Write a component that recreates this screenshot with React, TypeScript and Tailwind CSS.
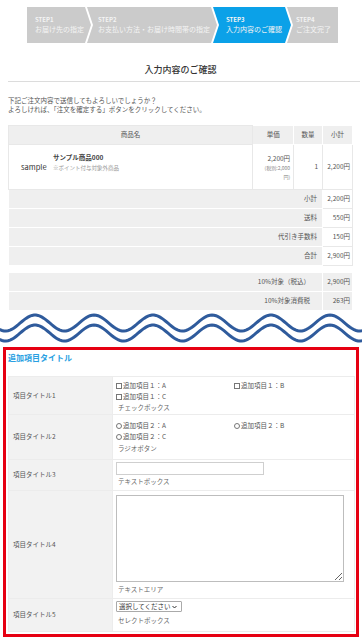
import React from "react"

const steps = [
  { label: "STEP1", text: "お届け先の指定", w: "w-[64px]", shape: "first" },
  { label: "STEP2", text: "お支払い方法・お届け時間帯の指定", w: "w-[130px]", shape: "mid" },
  { label: "STEP3", text: "入力内容のご確認", w: "w-[78px]", shape: "active" },
  { label: "STEP4", text: "ご注文完了", w: "w-[51px]", shape: "last" },
]

const summary = [
  { label: "小計", value: "2,200円" },
  { label: "送料", value: "550円" },
  { label: "代引き手数料", value: "150円" },
  { label: "合計", value: "2,900円" },
]

function wavePath(center: number) {
  const pts: string[] = []
  for (let x = -4; x <= 366; x += 2) {
    const y = center - 8 * Math.cos((2 * Math.PI * (x - 35)) / 59)
    pts.push(`${x},${y.toFixed(2)}`)
  }
  return "M" + pts.join(" L")
}

function StepBar() {
  return (
    <div className="flex h-[36px] pl-[27px]">
      {steps.map((s) => (
        <div
          key={s.label}
          className={
            s.w +
            " h-full flex flex-col justify-center text-[#f4f4f4] " +
            (s.shape === "first"
              ? "pl-[8px] bg-[#cbcbcb] [clip-path:polygon(0_0,calc(100%_-_6px)_0,100%_50%,calc(100%_-_6px)_100%,0_100%)]"
              : s.shape === "mid"
              ? "-ml-[4px] pl-[11px] bg-[#cbcbcb] [clip-path:polygon(0_0,calc(100%_-_6px)_0,100%_50%,calc(100%_-_6px)_100%,0_100%,6px_50%)]"
              : s.shape === "active"
              ? "-ml-[4px] pl-[13px] bg-[#0ba1e8] [clip-path:polygon(0_0,calc(100%_-_6px)_0,100%_50%,calc(100%_-_6px)_100%,0_100%,6px_50%)]"
              : "-ml-[4px] pl-[9px] bg-[#cbcbcb] [clip-path:polygon(0_0,100%_0,100%_100%,0_100%,6px_50%)]")
          }
        >
          <span className="text-[6px] leading-[9px] font-semibold">{s.label}</span>
          <span className="text-[7px] leading-[11px] whitespace-nowrap">{s.text}</span>
        </div>
      ))}
    </div>
  )
}

function Box({ round }: { round?: boolean }) {
  return (
    <span
      className={
        "inline-block w-[6px] h-[6px] border border-[#777] bg-white mr-[1px] align-[-0.5px] " +
        (round ? "rounded-full" : "")
      }
    />
  )
}

function FormRow({ title, h, children }: { title: string; h: string; children: React.ReactNode }) {
  return (
    <tr className={h}>
      <td className="w-[104px] bg-[#f2f2f2] border border-[#ececec] pl-[4px] align-middle text-[6.5px] text-[#555]">
        {title}
      </td>
      <td className="border border-[#ececec] pl-[3px] align-top">{children}</td>
    </tr>
  )
}

export default function App() {
  return (
    <div className="w-[362px] h-[640px] bg-white overflow-hidden font-['Noto_Sans_CJK_JP','Noto_Sans',sans-serif] text-[#555]">
      <div className="pt-[7px]">
        <StepBar />
      </div>

      <div className="pl-[8px] pr-[9px]">
        <div className="mt-[21px] -mr-[7px] pb-[5px] border-b border-[#dcdcdc] text-center text-[9px] leading-[12px] font-medium text-[#333]">
          <span className="pr-[7px]">入力内容のご確認</span>
        </div>

        <p className="mt-[14px] text-[6.5px] leading-[8.5px] text-[#555]">
          下記ご注文内容で送信してもよろしいでしょうか？
          <br />
          よろしければ、「注文を確定する」ボタンをクリックしてください。
        </p>

        <table className="mt-[12px] w-[345px] border-collapse text-[6.5px] text-[#555]">
          <thead>
            <tr className="h-[19px] bg-[#efefef]">
              <th className="font-normal border border-[#e8e8e8] w-[245px]">商品名</th>
              <th className="font-normal border border-white w-[41px]">単価</th>
              <th className="font-normal border border-white w-[29px]">数量</th>
              <th className="font-normal border border-white w-[30px]">小計</th>
            </tr>
          </thead>
          <tbody>
            <tr className="h-[45px]">
              <td className="border border-[#e8e8e8]">
                <div className="flex items-center">
                  <span className="w-[44px] pl-[12px] text-[7.5px] text-[#333]">sample</span>
                  <div className="flex flex-col -mt-[10px]">
                    <span className="text-[6.5px] leading-[11px] font-bold text-[#444]">サンプル商品000</span>
                    <span className="text-[5.5px] leading-[10px] text-[#9a9a9a]">※ポイント付与対象外商品</span>
                  </div>
                </div>
              </td>
              <td className="border border-[#e8e8e8] text-right pr-[3px] align-middle">
                <div className="leading-[10px]">2,200円</div>
                <div className="text-[5px] leading-[9px] text-[#888]">
                  (税別:2,000
                  <br />
                  円)
                </div>
              </td>
              <td className="border border-[#e8e8e8] text-right pr-[4px]">1</td>
              <td className="border border-[#e8e8e8] text-right pr-[2px]">2,200円</td>
            </tr>
            {summary.map((r) => (
              <tr key={r.label} className="h-[19px]">
                <td colSpan={3} className="bg-[#efefef] border border-white text-right pr-[5px]">
                  {r.label}
                </td>
                <td className="border border-[#e8e8e8] text-right pr-[2px]">{r.value}</td>
              </tr>
            ))}
            <tr className="h-[7px]">
              <td colSpan={4} />
            </tr>
            <tr className="h-[19px]">
              <td colSpan={3} className="bg-[#efefef] border border-white text-right pr-[12px]">
                10%対象（税込）
              </td>
              <td className="bg-[#efefef] border border-white text-right pr-[2px]">2,900円</td>
            </tr>
            <tr className="h-[19px]">
              <td colSpan={3} className="bg-[#efefef] border border-white text-right pr-[12px]">
                10%対象消費税
              </td>
              <td className="bg-[#efefef] border border-white text-right pr-[2px]">263円</td>
            </tr>
          </tbody>
        </table>
      </div>

      <svg width="362" height="35" className="block mt-[1px]">
        <path d={wavePath(11)} fill="none" stroke="#2f5b9c" strokeWidth="3" />
        <path d={wavePath(21)} fill="none" stroke="#2f5b9c" strokeWidth="3" />
      </svg>

      <div className="mx-[3px] h-[290px] border-[3px] border-[#e60012]">
        <div className="pl-[2px] pt-[2px] text-[8px] leading-[12px] font-bold text-[#2a9fe2]">
          追加項目タイトル
        </div>
        <table className="mt-[12px] ml-[2px] w-[347px] border-collapse text-[6.5px] text-[#555]">
          <tbody>
            <FormRow title="項目タイトル1" h="h-[38px]">
              <div className="pt-[3px] flex flex-wrap leading-[11px]">
                <span className="w-[118px]"><Box />追加項目１：A</span>
                <span className="w-[118px]"><Box />追加項目１：B</span>
                <span className="w-[118px]"><Box />追加項目１：C</span>
              </div>
              <div className="pl-[2px] leading-[11px] text-[#666]">チェックボックス</div>
            </FormRow>
            <FormRow title="項目タイトル2" h="h-[45px]">
              <div className="pt-[5px] flex flex-wrap leading-[11px]">
                <span className="w-[118px]"><Box round />追加項目２：A</span>
                <span className="w-[118px]"><Box round />追加項目２：B</span>
                <span className="w-[118px]"><Box round />追加項目２：C</span>
              </div>
              <div className="pl-[2px] leading-[12px] text-[#666]">ラジオボタン</div>
            </FormRow>
            <FormRow title="項目タイトル3" h="h-[31px]">
              <div className="pt-[2px]">
                <div className="w-[148px] h-[13px] border border-[#cfcfcf] bg-white" />
              </div>
              <div className="pl-[2px] leading-[12px] text-[#666]">テキストボックス</div>
            </FormRow>
            <FormRow title="項目タイトル4" h="h-[108px]">
              <div className="pt-[4px]">
                <textarea className="block w-[228px] h-[87px] border border-[#bdbdbd] bg-white resize" />
              </div>
              <div className="pl-[2px] pt-[1px] leading-[12px] text-[#666]">テキストエリア</div>
            </FormRow>
            <FormRow title="項目タイトル5" h="h-[33px]">
              <div className="pt-[2px]">
                <div className="inline-flex items-center w-[66px] h-[11px] border border-[#aaa] rounded-[1px] pl-[2px] text-[6.5px] text-[#333] whitespace-nowrap">
                  選択してください
                  <svg width="5" height="4" viewBox="0 0 10 8" className="ml-[1px]">
                    <path d="M1 2 L5 6 L9 2" fill="none" stroke="#333" strokeWidth="2" />
                  </svg>
                </div>
              </div>
              <div className="pl-[2px] pt-[3px] leading-[10px] text-[#666]">セレクトボックス</div>
            </FormRow>
          </tbody>
        </table>
      </div>
    </div>
  )
}
